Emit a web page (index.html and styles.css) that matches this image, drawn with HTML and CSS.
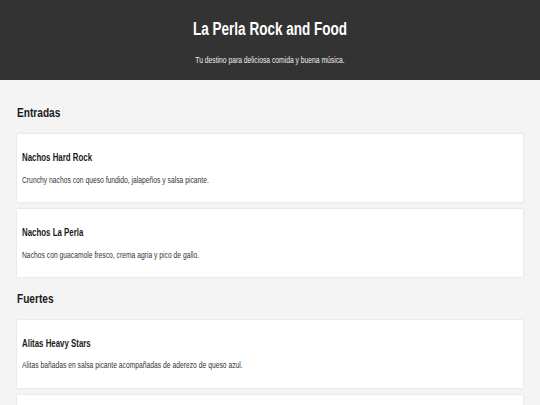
FILE: index.html
```html
<!DOCTYPE html>
<html lang="es">
<head>
<meta charset="utf-8">
<title>La Perla Rock and Food</title>
<link rel="stylesheet" href="styles.css">
</head>
<body>
<header class="site-header">
  <h1 class="site-title">La Perla Rock and Food</h1>
  <p class="site-tagline">Tu destino para deliciosa comida y buena música.</p>
</header>
<main class="menu">
  <section class="menu-section">
    <h2 class="section-title">Entradas</h2>
    <article class="dish">
      <h3 class="dish-name">Nachos Hard Rock</h3>
      <p class="dish-desc">Crunchy nachos con queso fundido, jalapeños y salsa picante.</p>
    </article>
    <article class="dish">
      <h3 class="dish-name">Nachos La Perla</h3>
      <p class="dish-desc">Nachos con guacamole fresco, crema agria y pico de gallo.</p>
    </article>
  </section>
  <section class="menu-section">
    <h2 class="section-title">Fuertes</h2>
    <article class="dish">
      <h3 class="dish-name">Alitas Heavy Stars</h3>
      <p class="dish-desc">Alitas bañadas en salsa picante acompañadas de aderezo de queso azul.</p>
    </article>
    <article class="dish">
      <h3 class="dish-name">Hamburguesa Metalera</h3>
      <p class="dish-desc">Carne de res, tocino, queso cheddar y cebolla caramelizada.</p>
    </article>
  </section>
</main>
</body>
</html>
```
FILE: styles.css
```css
html, body {
  margin: 0;
  padding: 0;
}

body {
  background: #f4f4f4;
  color: #222;
  font-family: "Liberation Sans", Arial, sans-serif;
}

/* the type is set in a condensed proportion */
.site-title,
.site-tagline {
  transform: scaleX(0.75);
  transform-origin: center top;
}

.section-title,
.dish-name,
.dish-desc {
  transform: scaleX(0.75);
  transform-origin: left top;
}

.site-header {
  background: #333;
  color: #fff;
  text-align: center;
  height: 80px;
  box-sizing: border-box;
  padding: 19px 0 0;
}

.site-title {
  margin: 0;
  font-size: 18px;
  line-height: 21px;
  font-weight: bold;
}

.site-tagline {
  margin: 14.5px 0 0;
  font-size: 9px;
  line-height: 10px;
  color: #eee;
}

.menu {
  padding: 11.6px 17px;
}

.section-title {
  margin: 13.5px 0 13.8px;
  font-size: 13.5px;
  line-height: 15px;
  font-weight: bold;
  color: #1a1a1a;
}

.dish {
  background: #fff;
  margin-bottom: 7px;
  padding: 17.4px 5px 17.4px;
  box-shadow: 0 0 2px rgba(0, 0, 0, 0.13);
}

.dish-name {
  margin: 0 0 11.4px;
  font-size: 10.5px;
  line-height: 12px;
  font-weight: bold;
  color: #1a1a1a;
}

.dish-desc {
  margin: 0;
  font-size: 9px;
  line-height: 10px;
  color: #333;
}
```
